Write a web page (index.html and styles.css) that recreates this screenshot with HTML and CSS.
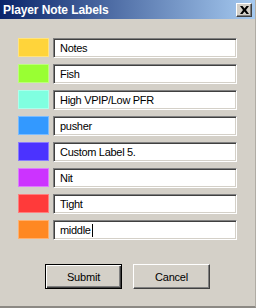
FILE: index.html
```html
<!DOCTYPE html>
<html lang="en">
<head>
  <meta charset="UTF-8" />
  <title>Player Note Labels</title>
  <link rel="stylesheet" href="styles.css">
</head>
<body>
  <div class="window">
    <div class="titlebar">
      <span class="title">Player Note Labels</span>
      <span class="close">
        <svg width="9" height="8" viewBox="0 0 9 8">
          <path d="M0 0h2.5l2 2.6 2-2.6H9L6 4l3 4H6.5l-2-2.6-2 2.6H0l3-4z" fill="#000"/>
        </svg>
      </span>
    </div>

    <div class="content">
      <div class="labels">
        <div class="row">
          <span class="swatch" style="background:#ffd43a"></span>
          <div class="field">Notes</div>
        </div>
        <div class="row">
          <span class="swatch" style="background:#99ff33"></span>
          <div class="field">Fish</div>
        </div>
        <div class="row">
          <span class="swatch" style="background:#80ffe0"></span>
          <div class="field">High VPIP/Low PFR</div>
        </div>
        <div class="row">
          <span class="swatch" style="background:#3399ff"></span>
          <div class="field">pusher</div>
        </div>
        <div class="row">
          <span class="swatch" style="background:#4b33ff"></span>
          <div class="field">Custom Label 5.</div>
        </div>
        <div class="row">
          <span class="swatch" style="background:#cc33ff"></span>
          <div class="field">Nit</div>
        </div>
        <div class="row">
          <span class="swatch" style="background:#ff3a3a"></span>
          <div class="field">Tight</div>
        </div>
        <div class="row">
          <span class="swatch" style="background:#ff8822"></span>
          <div class="field">middle<span class="caret"></span></div>
        </div>
      </div>

      <div class="buttons">
        <button class="btn default">Submit</button>
        <button class="btn">Cancel</button>
      </div>
    </div>
  </div>
</body>
</html>
```

FILE: styles.css
```css
body {
  margin: 0;
  background-color: #d4d0c8; /* classic dialog gray */
  font-family: 'Liberation Sans', Arial, sans-serif;
}

.window {
  width: 256px;
  height: 308px;
  box-sizing: border-box;
  border-right: 1px solid #b0aca4;
  border-bottom: 2px solid #8c8984;
  background: #d4d0c8;
}

.titlebar {
  height: 19px;
  display: flex;
  align-items: center;
  justify-content: space-between;
  padding: 0 3px 0 3px;
  background: linear-gradient(to right, #0a246a, #a6caf0);
}

.title {
  color: #fff;
  font-weight: bold;
  font-size: 12px;
  letter-spacing: -0.1px;
}

.close {
  width: 16px;
  height: 14px;
  box-sizing: border-box;
  display: flex;
  align-items: center;
  justify-content: center;
  background: #d4d0c8;
  border: 1px solid;
  border-color: #fff #404040 #404040 #fff;
  box-shadow: inset -1px -1px #808080;
}

.content {
  padding: 19px 0 0 18px;
}

.labels {
  display: flex;
  flex-direction: column;
  gap: 6px;
}

.row {
  display: flex;
  gap: 4px;
  height: 20px;
}

.swatch {
  width: 31px;
  height: 19px;
  box-sizing: border-box;
  border: 1px solid rgba(255, 255, 255, 0.35);
}

.field {
  width: 184px;
  height: 20px;
  box-sizing: border-box;
  background: #fff;
  border: 1px solid;
  border-color: #808080 #fff #fff #808080;
  box-shadow: inset 1px 1px #404040, inset -1px -1px #d4d0c8;
  padding: 0 0 0 6px;
  font-size: 11px;
  letter-spacing: -0.3px;
  line-height: 18px;
  color: #000;
  display: flex;
  align-items: center;
}

.caret {
  display: inline-block;
  width: 1px;
  height: 13px;
  background: #000;
  margin-left: 1px;
}

.buttons {
  display: flex;
  justify-content: center;
  gap: 11px;
  margin: 24px 0 0 -18px;
}

.btn {
  width: 77px;
  height: 25px;
  box-sizing: border-box;
  background: #d4d0c8;
  font-family: 'Liberation Sans', Arial, sans-serif;
  font-size: 11px;
  letter-spacing: -0.2px;
  color: #000;
  border: 1px solid;
  border-color: #fff #404040 #404040 #fff;
  box-shadow: inset -1px -1px #808080;
  padding: 0;
}

.btn.default {
  border: 1px solid #000;
  box-shadow: inset 1px 1px #fff, inset -1px -1px #404040, inset -2px -2px #808080;
}
```
